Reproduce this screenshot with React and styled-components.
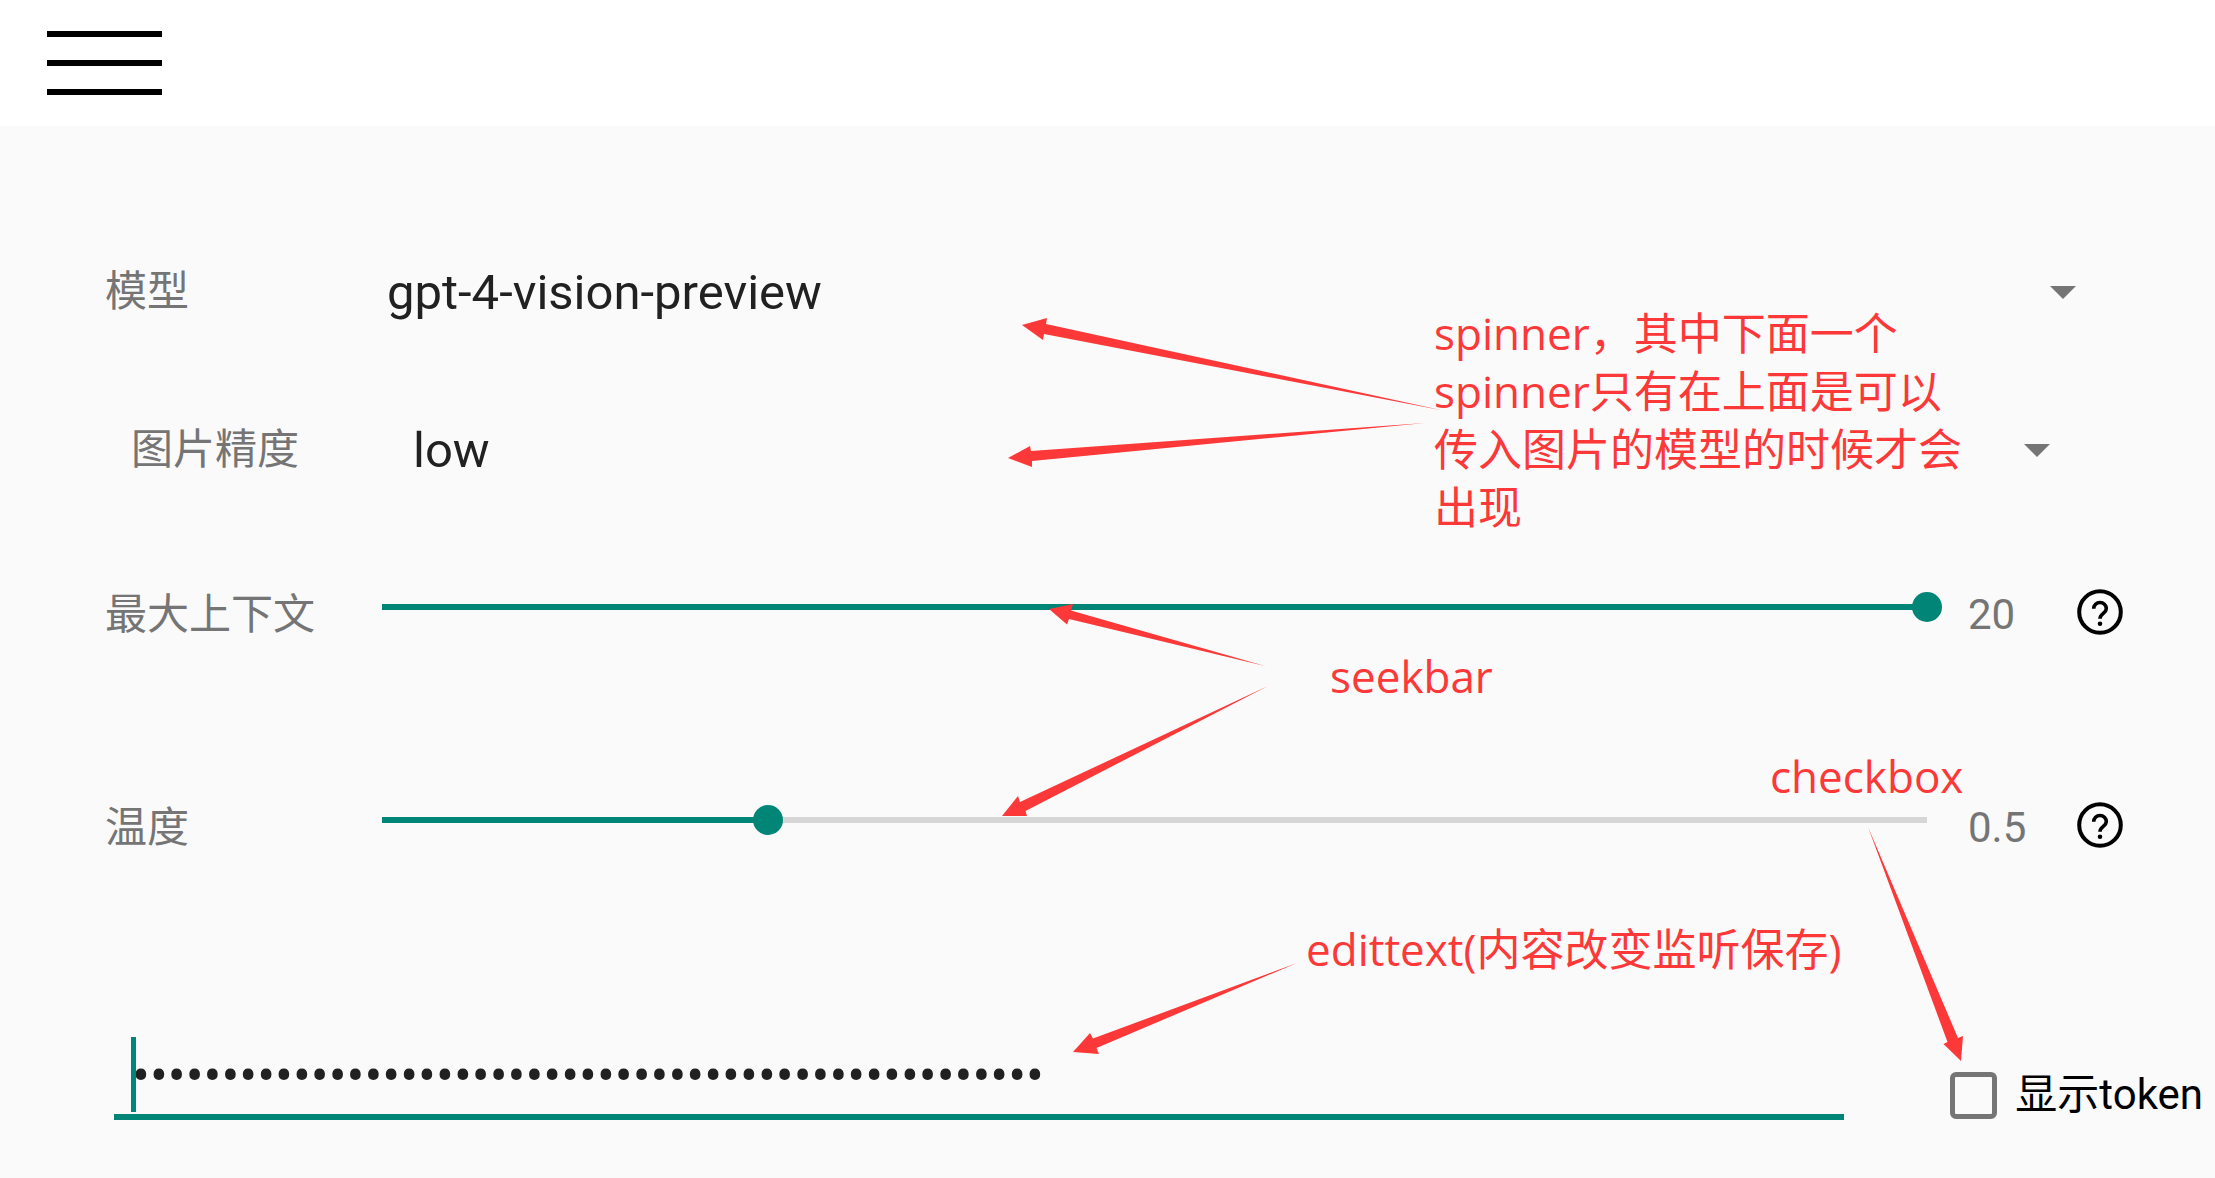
import React, { useState } from "react";
import styled, { createGlobalStyle } from "styled-components";

const TEAL = "#008577";
const RED = "#fc3838";

const GlobalStyle = createGlobalStyle`
  *, *::before, *::after { box-sizing: border-box; }
  body {
    margin: 0;
    background: #fafafa;
    font-family: Roboto, "Noto Sans CJK SC", sans-serif;
  }
`;

const Page = styled.div`
  position: relative;
  min-height: 100vh;
  overflow: hidden;
`;

const Header = styled.header`
  display: flex;
  align-items: flex-start;
  height: 126px;
  padding: 31px 47px 0;
  background: #fff;
`;

const MenuButton = styled.button`
  display: flex;
  flex-direction: column;
  gap: 23px;
  width: 115px;
  padding: 0;
  border: 0;
  background: none;
`;

const MenuLine = styled.span`
  height: 6px;
  background: #000;
`;

const Settings = styled.main`
  display: flex;
  flex-direction: column;
  padding-top: 130px;
`;

const SpinnerRow = styled.div`
  display: flex;
  align-items: center;
  height: 72px;
  margin-bottom: 86px;
  padding: 0 ${(p) => (p.$nested ? 165 : 139)}px 0 ${(p) => (p.$nested ? 131 : 105)}px;
`;

const FieldLabel = styled.label`
  flex: none;
  width: 262px;
  font-size: 42px;
  line-height: 60px;
  color: #757575;
`;

const SpinnerBox = styled.div`
  display: grid;
  flex: 1;
  align-items: center;

  > * { grid-area: 1 / 1; }
`;

const Spinner = styled.select`
  appearance: none;
  width: 100%;
  height: 72px;
  padding: 0 40px 0 20px;
  border: 0;
  background: none;
  font: 49px Roboto, "Noto Sans CJK SC", sans-serif;
  color: #212121;
`;

const SpinnerArrow = styled.svg`
  justify-self: end;
  width: 26px;
  height: 13px;
  pointer-events: none;
`;

const SeekRow = styled.div`
  display: flex;
  align-items: center;
  height: 64px;
  margin-top: ${(p) => (p.$first ? 11 : 149)}px;
  padding: 0 92px 0 105px;
`;

const SeekBar = styled.input`
  appearance: none;
  flex: 1;
  align-self: flex-start;
  min-width: 0;
  height: 48px;
  margin: 0;
  background:
    linear-gradient(${TEAL}, ${TEAL}) 15px center / calc((100% - 30px) * ${(p) => p.$fraction}) 6px no-repeat,
    linear-gradient(#d6d6d6, #d6d6d6) 15px center / calc(100% - 30px) 6px no-repeat;

  &::-webkit-slider-thumb {
    appearance: none;
    width: 30px;
    height: 30px;
    border-radius: 50%;
    background: ${TEAL};
  }
`;

const SeekValue = styled.output`
  flex: none;
  width: 135px;
  padding-left: 26px;
  font-size: 42px;
  line-height: 60px;
  color: #757575;
`;

const HelpButton = styled.button`
  display: flex;
  flex: none;
  align-items: center;
  align-self: flex-start;
  width: 46px;
  height: 58px;
  padding: 0;
  border: 0;
  background: none;
`;

const TokenRow = styled.div`
  display: flex;
  align-items: flex-end;
  gap: 106px;
  margin-top: 176px;
  padding: 0 12px 0 114px;
`;

const TokenField = styled.div`
  position: relative;
  flex: 1;
`;

const TokenInput = styled.input`
  display: block;
  width: 100%;
  height: 84px;
  padding: 2px 18px 0;
  border: 0;
  border-bottom: 6px solid ${TEAL};
  outline: 0;
  background: none;
  font: 53px Roboto, sans-serif;
  color: #212121;
`;

const Caret = styled.span`
  position: absolute;
  top: 1px;
  left: 17px;
  width: 5px;
  height: 75px;
  background: ${TEAL};
`;

const ShowToken = styled.label`
  display: flex;
  flex: none;
  align-items: center;
  gap: 18px;
  font-size: 42px;
  line-height: 50px;
  color: #000;
`;

const CheckBox = styled.input`
  appearance: none;
  width: 47px;
  height: 47px;
  margin: 0;
  border: 5px solid #757575;
  border-radius: 6px;

  &:checked { background: ${TEAL}; }
`;

const ArrowLayer = styled.svg`
  position: absolute;
  top: 0;
  left: 0;
  width: 2215px;
  height: 1178px;
  fill: ${RED};
  pointer-events: none;
`;

const Note = styled.p`
  position: absolute;
  top: ${(p) => p.$top}px;
  left: ${(p) => p.$left}px;
  margin: 0;
  font: 44px/58px "Open Sans", "Noto Sans CJK SC", sans-serif;
  white-space: pre-line;
  color: ${RED};
  pointer-events: none;
`;

const ARROWS = [
  "1022,325 1047,318 1046,324 1443,410.5 1044,334 1043,340",
  "1008,458 1030,446 1031,451 1425,423 1032,461 1032,467",
  "1049,609 1073,604 1071,610.5 1265,666 1069,619 1067,624.5",
  "1002,816 1018,796 1020,802 1268,686 1025.5,811 1027,816",
  "1073,1052 1090,1033 1093,1038.5 1297,963 1096.5,1048 1099,1054",
  "1961,1061 1963,1036 1958,1038 1868,827 1947.5,1042 1943.5,1044",
];

const NOTES = [
  { top: 304, left: 1434, text: "spinner，其中下面一个\nspinner只有在上面是可以\n传入图片的模型的时候才会\n出现" },
  { top: 647, left: 1330, text: "seekbar" },
  { top: 747, left: 1770, text: "checkbox" },
  { top: 920, left: 1306, text: "edittext(内容改变监听保存)" },
];

function SpinnerField({ id, label, options, nested }) {
  return (
    <SpinnerRow $nested={nested}>
      <FieldLabel htmlFor={id}>{label}</FieldLabel>
      <SpinnerBox>
        <Spinner id={id}>
          {options.map((o) => (
            <option key={o}>{o}</option>
          ))}
        </Spinner>
        <SpinnerArrow viewBox="0 0 26 13" aria-hidden="true">
          <path d="M0 0h26L13 13z" fill="#757575" />
        </SpinnerArrow>
      </SpinnerBox>
    </SpinnerRow>
  );
}

function SeekField({ id, label, max, step, initial, first }) {
  const [value, setValue] = useState(initial);
  return (
    <SeekRow $first={first}>
      <FieldLabel htmlFor={id}>{label}</FieldLabel>
      <SeekBar
        id={id}
        type="range"
        min={0}
        max={max}
        step={step}
        value={value}
        $fraction={value / max}
        onChange={(e) => setValue(Number(e.target.value))}
      />
      <SeekValue htmlFor={id}>{value}</SeekValue>
      <HelpButton type="button" aria-label={label}>
        <svg width="46" height="46" viewBox="0 0 46 46" fill="none" stroke="#000" aria-hidden="true">
          <circle cx="23" cy="23" r="20.8" strokeWidth="4" />
          <path d="M16.7 19.8a6.3 6.3 0 0 1 12.6 0c0 4.4-6.3 5-6.3 9.9" strokeWidth="3.6" />
          <circle cx="23" cy="34.7" r="2.3" fill="#000" stroke="none" />
        </svg>
      </HelpButton>
    </SeekRow>
  );
}

export default function App() {
  const [token, setToken] = useState("x".repeat(51));
  const [shown, setShown] = useState(false);

  return (
    <Page>
      <GlobalStyle />
      <Header>
        <MenuButton type="button" aria-label="menu">
          <MenuLine />
          <MenuLine />
          <MenuLine />
        </MenuButton>
      </Header>
      <Settings>
        <SpinnerField id="model" label="模型" options={["gpt-4-vision-preview"]} />
        <SpinnerField id="detail" label="图片精度" options={["low"]} nested />
        <SeekField id="context" label="最大上下文" max={20} step={1} initial={20} first />
        <SeekField id="temperature" label="温度" max={2} step={0.1} initial={0.5} />
        <TokenRow>
          <TokenField>
            <Caret />
            <TokenInput
              type={shown ? "text" : "password"}
              aria-label="token"
              value={token}
              onChange={(e) => setToken(e.target.value)}
            />
          </TokenField>
          <ShowToken>
            <CheckBox type="checkbox" checked={shown} onChange={(e) => setShown(e.target.checked)} />
            显示token
          </ShowToken>
        </TokenRow>
      </Settings>
      <ArrowLayer viewBox="0 0 2215 1178" aria-hidden="true">
        {ARROWS.map((points) => (
          <polygon key={points} points={points} />
        ))}
      </ArrowLayer>
      {NOTES.map((n) => (
        <Note key={n.text} $top={n.top} $left={n.left}>
          {n.text}
        </Note>
      ))}
    </Page>
  );
}
